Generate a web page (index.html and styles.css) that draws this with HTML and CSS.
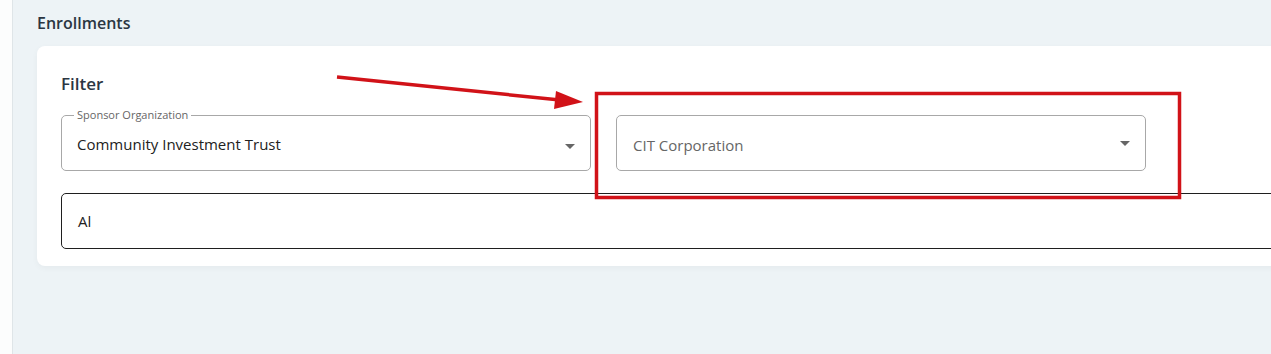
FILE: index.html
```html
<!DOCTYPE html>
<html lang="en">
<head>
    <meta charset="UTF-8">
    <meta name="viewport" content="width=device-width, initial-scale=1.0">
    <title>Enrollments</title>
    <link rel="stylesheet" href="styles.css">
</head>
<body>
    <div class="layout">
        <div class="sidebar"></div>
        <div class="main">
            <h2 class="page-title">Enrollments</h2>

            <div class="card">
                <h3 class="card-title">Filter</h3>

                <div class="filter-row">
                    <fieldset class="select-box">
                        <legend>Sponsor Organization</legend>
                        <span class="select-value">Community Investment Trust</span>
                        <span class="caret"></span>
                    </fieldset>

                    <div class="select-box plain">
                        <span class="select-value placeholder">CIT Corporation</span>
                        <span class="caret"></span>
                    </div>
                </div>

                <div class="text-box">
                    <span class="select-value">Al</span>
                </div>
            </div>
        </div>
    </div>

    <!-- annotation: arrow + highlight box -->
    <svg class="annotation" width="1271" height="354" viewBox="0 0 1271 354">
        <line x1="337" y1="77" x2="560" y2="100" stroke="#d11218" stroke-width="3.5"/>
        <polygon points="583,102 556,91 554,109" fill="#d11218"/>
        <rect x="596.5" y="93.5" width="583" height="104" fill="none" stroke="#d11218" stroke-width="3.5"/>
    </svg>
</body>
</html>
```

FILE: styles.css
```css
/* General */
body {
    font-family: 'Open Sans', 'Noto Sans', sans-serif;
    background-color: #ffffff;
    color: #222;
    margin: 0;
    padding: 0;
    overflow: hidden;
    height: 354px;
}

.layout {
    display: flex;
    height: 100%;
}

.sidebar {
    width: 12px;
    flex-shrink: 0;
    background-color: #fcfdfd;
    border-right: 1px solid #dfe5e8;
}

.main {
    flex: 1;
    background-color: #edf3f6;
    padding: 12px 0 0 24px;
    overflow: hidden;
}

.page-title {
    margin: 0;
    font-size: 16px;
    font-weight: 600;
    line-height: 22px;
    color: #2b3642;
}

.card {
    margin-top: 12px;
    width: 1290px;
    background-color: white;
    border-radius: 8px;
    box-shadow: 0 2px 6px rgba(0, 0, 0, 0.04);
    padding: 27px 24px 17px 24px;
    box-sizing: border-box;
}

.card-title {
    margin: 0 0 20px 0;
    font-size: 17px;
    font-weight: 600;
    line-height: 22px;
    color: #2b3642;
}

.filter-row {
    display: flex;
    gap: 25px;
}

.select-box {
    position: relative;
    width: 530px;
    height: 56px;
    margin: 0;
    padding: 0 16px;
    border: 1px solid #a8a8a8;
    border-radius: 5px;
    box-sizing: border-box;
    display: flex;
    align-items: center;
}

fieldset.select-box {
    display: block;
    padding: 0 12px;
    margin-top: -6px;
    height: 62px;
}

fieldset.select-box legend {
    font-size: 11px;
    color: #666;
    padding: 0 3px;
    line-height: 12px;
}

fieldset.select-box .select-value {
    display: block;
    margin-top: 13px;
    padding-left: 3px;
}

.select-value {
    font-size: 15px;
    color: #222;
}

.select-value.placeholder {
    color: #666;
    margin-top: 4px;
}

.caret {
    position: absolute;
    right: 15px;
    top: 50%;
    margin-top: -2px;
    width: 0;
    height: 0;
    border-left: 5px solid transparent;
    border-right: 5px solid transparent;
    border-top: 5px solid #666;
}

fieldset.select-box .caret {
    top: 23px;
    margin-top: 0;
}

.text-box {
    margin-top: 22px;
    width: 1240px;
    height: 56px;
    border: 1px solid #1f1f1f;
    border-radius: 5px;
    box-sizing: border-box;
    padding: 0 16px;
    display: flex;
    align-items: center;
}

.annotation {
    position: absolute;
    left: 0;
    top: 0;
    pointer-events: none;
}
```
